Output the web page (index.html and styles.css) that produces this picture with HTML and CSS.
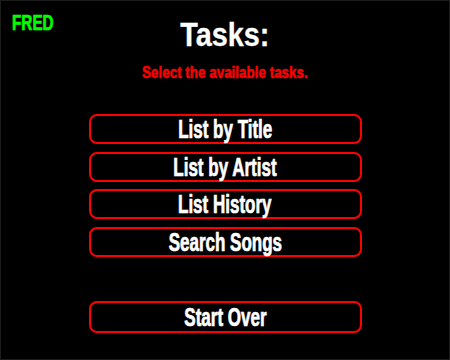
FILE: index.html
```html
<!DOCTYPE html>
<html>
<head>
<meta charset="utf-8">
<link rel="stylesheet" href="styles.css">
</head>
<body>
<div class="screen">
  <header class="top">
    <div class="user"><span class="narrow">FRED</span></div>
    <div class="titles">
      <h1 class="title"><span class="semi">Tasks:</span></h1>
      <p class="subtitle"><span class="sub">Select the available tasks.</span></p>
    </div>
    <div></div>
  </header>
  <nav class="tasks">
    <button class="btn"><span class="narrow">List by Title</span></button>
    <button class="btn"><span class="narrow">List by Artist</span></button>
    <button class="btn"><span class="narrow">List History</span></button>
    <button class="btn"><span class="narrow">Search Songs</span></button>
  </nav>
  <div class="footer">
    <button class="btn btn-tall"><span class="narrow">Start Over</span></button>
  </div>
</div>
</body>
</html>
```
FILE: styles.css
```css
html, body {
  margin: 0;
  padding: 0;
  background: #000;
}
.screen {
  box-sizing: border-box;
  width: 450px;
  height: 360px;
  border: 1px solid #1c1c1c;
  background: #000;
  font-family: "Liberation Sans", Arial, sans-serif;
  font-weight: bold;
  display: flex;
  flex-direction: column;
  align-items: center;
}
.narrow {
  display: inline-block;
  white-space: nowrap;
  transform: scaleX(0.68);
  -webkit-text-stroke: 0.7px currentColor;
}
.semi {
  display: inline-block;
  white-space: nowrap;
  transform: scaleX(0.86);
  -webkit-text-stroke: 0.3px currentColor;
}
.sub {
  display: inline-block;
  white-space: nowrap;
  transform: scaleX(0.79);
  -webkit-text-stroke: 0.5px currentColor;
}
.top {
  width: 100%;
  display: grid;
  grid-template-columns: 1fr auto 1fr;
}
.user {
  color: #00ff00;
  font-size: 22.5px;
  line-height: 22px;
  padding: 11px 0 0 11px;
}
.user .narrow {
  transform-origin: left center;
}
.titles {
  display: flex;
  flex-direction: column;
  align-items: center;
}
.title {
  margin: 17px 0 0;
  color: #fff;
  font-size: 33.5px;
  line-height: 34px;
  font-weight: bold;
}
.subtitle {
  margin: 11px 0 0;
  color: #ff0000;
  font-size: 17px;
  line-height: 20px;
}
.tasks {
  margin-top: 31px;
  display: flex;
  flex-direction: column;
  gap: 7.5px;
}
.footer {
  margin-top: 44.5px;
}
.btn {
  box-sizing: border-box;
  width: 273px;
  height: 30px;
  border: 2px solid #ff0000;
  border-radius: 8px;
  background: #000;
  color: #fff;
  font-family: "Liberation Sans", Arial, sans-serif;
  font-weight: bold;
  font-size: 25px;
  line-height: 26px;
  padding: 0;
  display: flex;
  align-items: center;
  justify-content: center;
}
.btn-tall {
  height: 32px;
}
```
